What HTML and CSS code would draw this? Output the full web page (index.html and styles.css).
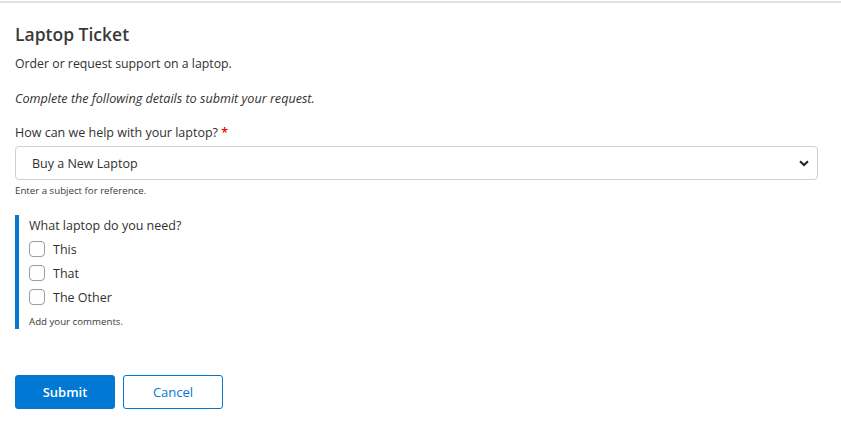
FILE: index.html
```html
<!DOCTYPE html>
<html lang="en">
<head>
<meta charset="utf-8">
<title>Laptop Ticket</title>
<link rel="stylesheet" href="styles.css">
</head>
<body>
<div class="page">
  <form class="form">
    <h1 class="title">Laptop Ticket</h1>
    <p class="desc">Order or request support on a laptop.</p>
    <p class="intro">Complete the following details to submit your request.</p>

    <div class="field">
      <label class="label" for="help">How can we help with your laptop? <span class="req">*</span></label>
      <div class="select-wrap">
        <select id="help" class="select">
          <option>Buy a New Laptop</option>
        </select>
        <svg class="chev" width="10" height="7" viewBox="0 0 10 7"><path d="M1 1.2 L5 5 L9 1.2" fill="none" stroke="#222" stroke-width="2"/></svg>
      </div>
      <div class="help">Enter a subject for reference.</div>
    </div>

    <div class="group">
      <div class="question">What laptop do you need?</div>
      <label class="check"><span class="box"></span><span>This</span></label>
      <label class="check"><span class="box"></span><span>That</span></label>
      <label class="check"><span class="box"></span><span>The Other</span></label>
      <div class="help comments">Add your comments.</div>
    </div>

    <div class="actions">
      <button type="button" class="btn primary">Submit</button>
      <button type="button" class="btn secondary">Cancel</button>
    </div>
  </form>
</div>
</body>
</html>
```
FILE: styles.css
```css
* { box-sizing: border-box; }
html, body { margin: 0; padding: 0; background: #fff; }
body {
  font-family: "Open Sans", "Noto Sans", sans-serif;
  color: #323130;
}
.page {
  margin-top: 1px;
  border-top: 2px solid #dde2ea;
}
.form {
  padding: 19px 23px 0 15px;
}
.title {
  margin: 0;
  font-size: 17.5px;
  font-weight: 600;
  line-height: 24px;
  color: #3a3938;
}
.desc {
  margin: 8px 0 0;
  font-size: 12.3px;
  line-height: 20px;
}
.intro {
  margin: 15px 0 0;
  font-size: 12.6px;
  line-height: 20px;
  font-style: italic;
}
.field { margin-top: 14px; }
.label {
  display: block;
  font-size: 12.5px;
  line-height: 20px;
}
.req { color: #e00; font-weight: 600; }
.select-wrap {
  position: relative;
  margin-top: 3px;
}
.select {
  display: block;
  width: 100%;
  height: 34px;
  appearance: none;
  -webkit-appearance: none;
  border: 1px solid #cfd0d2;
  border-radius: 4px;
  background: #fff;
  padding: 0 30px 0 16px;
  font-family: inherit;
  font-size: 12.5px;
  color: #323130;
}
.chev {
  position: absolute;
  right: 9px;
  top: 14px;
  pointer-events: none;
}
.help {
  margin-top: 4px;
  font-size: 9.7px;
  line-height: 14px;
  color: #3b3a39;
}
.group {
  margin-top: 17px;
  border-left: 4px solid #0078d4;
  padding: 1px 0 0 10px;
  display: flex;
  flex-direction: column;
}
.question {
  font-size: 12.5px;
  line-height: 20px;
  margin-bottom: 1px;
}
.check {
  display: flex;
  align-items: center;
  gap: 8px;
  height: 24px;
  font-size: 12.5px;
}
.box {
  width: 16px;
  height: 16px;
  border: 1px solid #9a9ca0;
  border-radius: 4px;
  background: #fff;
  flex: none;
}
.comments { margin-top: 6px; }
.actions {
  margin-top: 46px;
  display: flex;
  gap: 8px;
}
.btn {
  width: 100px;
  height: 34px;
  border-radius: 3px;
  font-family: inherit;
  font-size: 13px;
  cursor: pointer;
}
.primary {
  background: #0078d4;
  border: 1px solid #0078d4;
  color: #fff;
  font-weight: 600;
}
.secondary {
  background: #fff;
  border: 1px solid #0078d4;
  color: #0078d4;
}
```
